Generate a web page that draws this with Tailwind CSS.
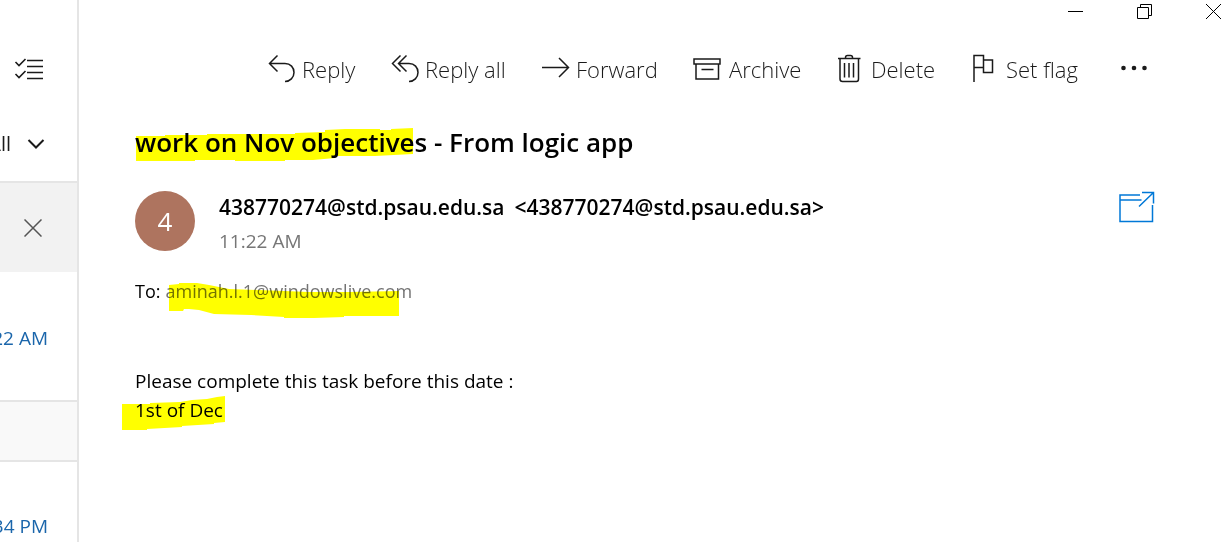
<!DOCTYPE html>
<html lang="en">
<head>
<meta charset="utf-8">
<meta name="viewport" content="width=device-width, initial-scale=1">
<title>Mail</title>
<script src="https://cdn.jsdelivr.net/npm/@tailwindcss/browser@4"></script>
</head>
<body class="flex min-h-screen overflow-x-hidden bg-white font-['Open_Sans',sans-serif] text-black">
  <aside class="flex w-[79px] shrink-0 flex-col overflow-hidden border-r-2 border-[#e5e5e5]">
    <div class="flex h-[113px] items-end px-[14px] pb-[29px]">
      <button aria-label="Select messages">
        <svg class="block h-[28px] w-[30px]" viewBox="0 0 30 28" fill="none" stroke="#1a1a1a" stroke-width="1.6"><path d="M13 4.500H29M13 10.500H29M13 16.500H29M13 22.500H29M1.500 6L5 9.500L11.500 3M1.500 18L5 21.500L11.500 15"/></svg>
      </button>
    </div>
    <div class="flex h-[68px] items-start justify-end pt-[17px] pr-[32px]">
      <button class="flex shrink-0 items-center gap-4 text-xl text-[#1a1a1a]">All
        <svg class="h-[12px] w-[18px]" viewBox="0 0 18 12" fill="none" stroke="#1a1a1a" stroke-width="2"><path d="M1.500 2L9 9.500L16.500 2"/></svg>
      </button>
    </div>
    <div class="flex h-[91px] items-center border-t-2 border-[#e5e5e5] bg-[#f2f2f2] pl-[24px]">
      <button aria-label="Dismiss">
        <svg class="block size-[18px]" viewBox="0 0 18 18" fill="none" stroke="#555" stroke-width="1.500"><path d="M.5 .5L17.500 17.500M17.500 .5L.5 17.500"/></svg>
      </button>
    </div>
    <div class="flex h-[128px] items-center justify-end pt-1 pr-[29px] text-[19px] whitespace-nowrap text-[#1b66ab]"><time class="shrink-0">11:22 AM</time></div>
    <div class="h-[62px] border-y-2 border-[#e5e5e5] bg-[#f9f9f9]"></div>
    <div class="flex h-[80px] items-end justify-end pr-[29px] text-[19px] whitespace-nowrap text-[#1b66ab]"><time class="shrink-0 pb-[2px]">10:34 PM</time></div>
  </aside>

  <main class="min-w-0 flex-1">
    <div class="flex h-[20px] justify-end gap-[52px] pr-[8px]">
      <button aria-label="Minimize"><svg class="block size-[17px]" viewBox="0 0 17 17" fill="none" stroke="#000"><path d="M1 9.500H16"/></svg></button>
      <button aria-label="Restore"><svg class="block size-[17px]" viewBox="0 0 17 17" fill="none" stroke="#000"><path d="M1.500 5.500H12.500V16.500H1.500ZM4.500 5.500V2.500H15.500V13.500H12.500"/></svg></button>
      <button aria-label="Close"><svg class="block size-[17px]" viewBox="0 0 17 17" fill="none" stroke="#000"><path d="M1 2L16 17M16 2L1 17"/></svg></button>
    </div>

    <nav aria-label="Message actions" class="flex h-[98px] items-center justify-end pr-[82px] text-[22px] font-light whitespace-nowrap text-[#1a1a1a]">
      <button class="flex w-[123px] items-center gap-[6px]">
        <svg class="h-[30px] w-[28px] shrink-0" viewBox="0 0 28 30" fill="none" stroke="#1a1a1a" stroke-width="1.500"><path d="M9.500 1.500L1.500 9.500L9.500 17.500M1.500 9.500H17C22.500 9.500 26 13.500 26 18.500S22 27.500 17 27.500"/></svg>Reply</button>
      <button class="flex w-[151px] items-center gap-[6px]">
        <svg class="h-[30px] w-[28px] shrink-0" viewBox="0 0 28 30" fill="none" stroke="#1a1a1a" stroke-width="1.500"><path d="M9.500 1.500L1.500 9.500L9.500 17.500M15.500 1.500L7.500 9.500L15.500 17.500M7.500 9.500H18C23.500 9.500 27 13.500 27 18.500S23 27.500 18 27.500"/></svg>Reply all</button>
      <button class="flex w-[151px] items-center gap-[6px]">
        <svg class="h-[30px] w-[28px] shrink-0" viewBox="0 0 28 30" fill="none" stroke="#1a1a1a" stroke-width="1.500"><path d="M0 13.500H26.500M17 4L26.500 13.500L17 23"/></svg>Forward</button>
      <button class="flex w-[144px] items-center gap-[8px]">
        <svg class="h-[30px] w-[28px] shrink-0" viewBox="0 0 28 30" fill="none" stroke="#1a1a1a" stroke-width="1.500"><path d="M1 5H27V10H1ZM3 10V25H25.500V10M8.500 15.500H20.500"/></svg>Archive</button>
      <button class="flex w-[135px] items-center gap-[10px]">
        <svg class="h-[30px] w-[24px] shrink-0" viewBox="0 0 24 30" fill="none" stroke="#1a1a1a" stroke-width="1.500"><path d="M1 4.500H23.500M3 4.500V25Q3 27.500 5.500 27.500H19.500Q21.500 27.500 21.500 25V4.500M8.500 4.500V3.500Q8.500 1.500 10.500 1.500H13.500Q15.500 1.500 15.500 3.500V4.500M7.500 9V23.500M12 9V23.500M16.500 9V23.500"/></svg>Delete</button>
      <button class="flex w-[149px] items-center gap-[10px]">
        <svg class="h-[30px] w-[24px] shrink-0" viewBox="0 0 24 30" fill="none" stroke="#1a1a1a" stroke-width="1.500"><path d="M2 28V1.500H11.500V13.500H2M11.500 6H20.500V18.500H11.500V13.500"/></svg>Set flag</button>
      <button aria-label="More actions"><svg class="block h-[30px] w-[27px]" viewBox="0 0 27 30" fill="#1a1a1a"><circle cx="2.500" cy="14" r="2.300"/><circle cx="13" cy="14" r="2.300"/><circle cx="23.500" cy="14" r="2.300"/></svg></button>
    </nav>

    <article class="pl-[56px] pr-[75px]">
      <h1 class="relative flex h-[50px] items-center pb-[2px] text-[26px] font-semibold whitespace-nowrap">
        <svg class="absolute top-[10px] left-0 h-[36px] w-[279px]" viewBox="0 0 279 36" fill="#ff0"><path d="M1 8H30V7L72 7V6L160 6V5L190 4V2L210 1H245V2H256V1L278 0V26L240 28H200V30L178 32H150V33H100V32H60V33H1Z"/></svg>
        <span class="relative">work on Nov objectives - From logic app</span>
      </h1>
      <header class="flex items-start pt-[22px]">
        <div class="mt-px flex size-[60px] items-center justify-center rounded-full bg-[#ae745f] text-[26px] text-white">4</div>
        <div class="ml-[24px] min-w-0 flex-1 whitespace-nowrap">
          <div class="flex gap-[10px] text-[21px] leading-[34px] font-semibold"><span>438770274@std.psau.edu.sa</span><span>&lt;438770274@std.psau.edu.sa&gt;</span></div>
          <time class="block text-[19px] leading-[34px] text-[#767676]">11:22 AM</time>
        </div>
        <button aria-label="Open in new window" class="mt-px">
          <svg class="block h-[32px] w-[36px]" viewBox="0 0 36 32" fill="none" stroke="#0078d7" stroke-width="1.500"><path d="M21 4H1V30.500H33.500V14M1 9H22.500M23 1.500H34.500V12.500M34.500 1.500L20 15.500"/></svg>
        </button>
      </header>
      <p class="relative flex h-[66px] items-center gap-[5px] text-[18px] whitespace-nowrap">
        <svg class="absolute top-[25px] left-[34px] h-[36px] w-[231px]" viewBox="0 0 231 36" fill="#ff0"><path d="M0 2L10 1V0H28L40 2L60 6L90 7L140 9H180L230 8V33H175V34L145 35H115V34L82 32L45 31L30 27L20 26H15L14 28H0Z"/></svg>
        <span class="relative">To:</span><a href="mailto:aminah.l.1@windowslive.com" class="relative text-[#737373] mix-blend-multiply">aminah.l.1@windowslive.com</a>
      </p>
      <div class="pt-[43px] text-[19px] leading-[29px]">
        <p>Please complete this task before this date :</p>
        <p class="relative">
          <svg class="absolute top-0 -left-[13px] h-[36px] w-[104px]" viewBox="0 0 104 36" fill="#ff0"><path d="M0 8H28V7L58 6L70 4L85 3L95 1L103 0V26L92 27V28L60 30V31L25 33V34H0Z"/></svg>
          <span class="relative">1st of Dec</span>
        </p>
      </div>
    </article>
  </main>
</body>
</html>
